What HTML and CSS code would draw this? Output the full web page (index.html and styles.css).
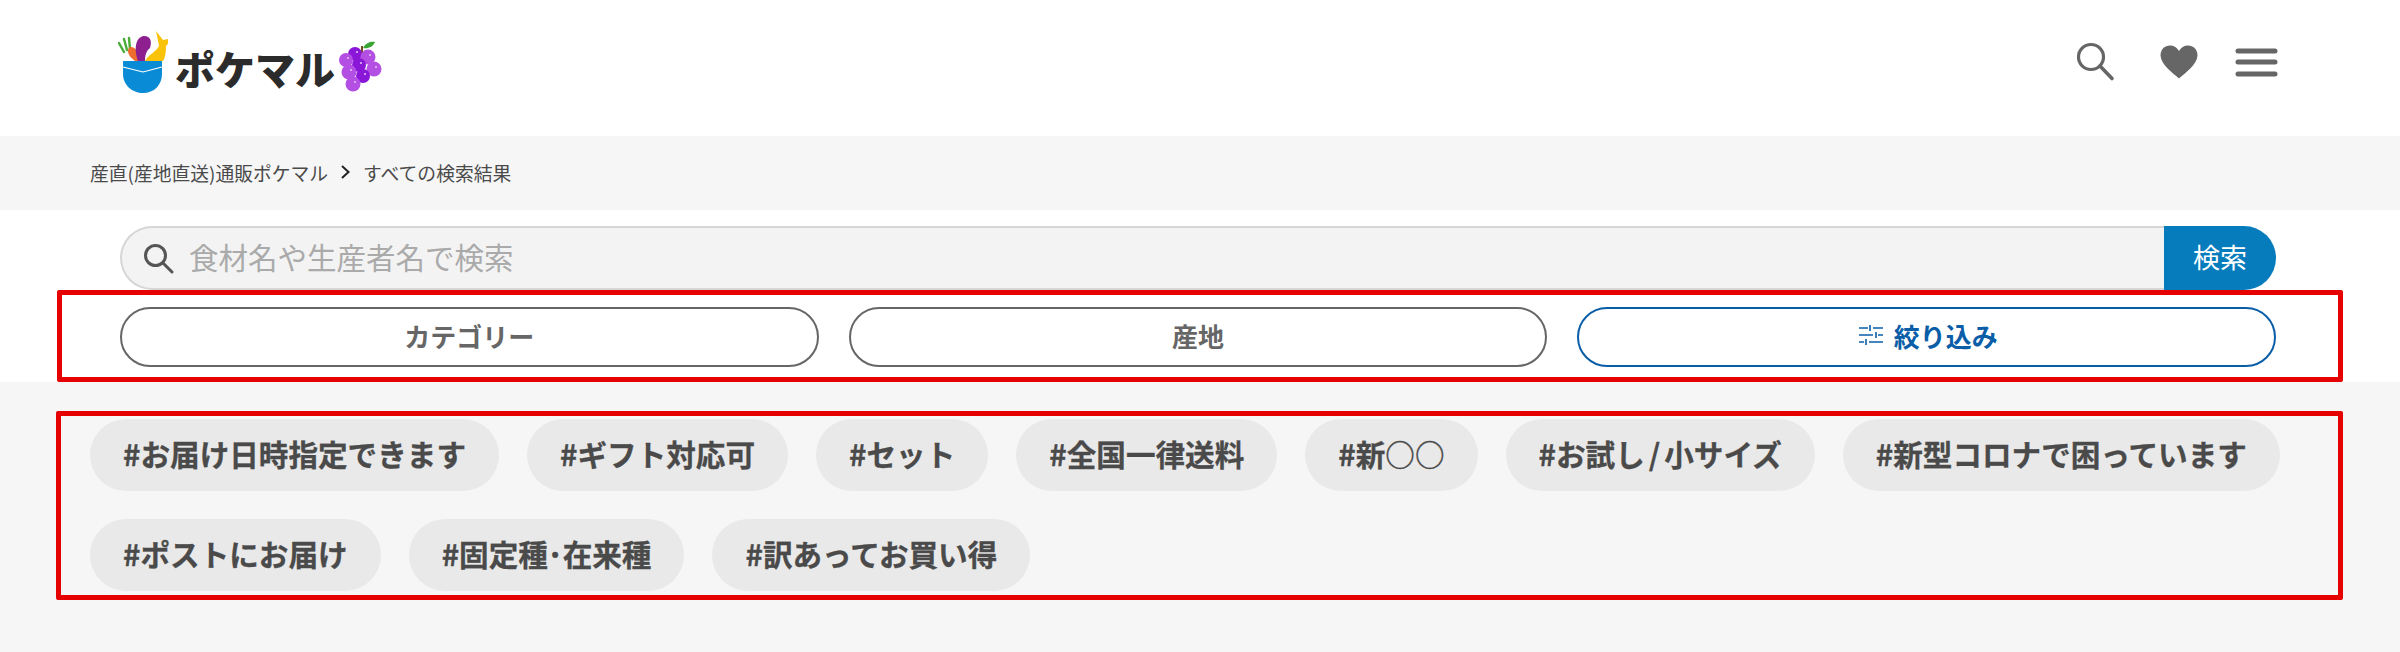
FILE: index.html
```html
<!DOCTYPE html>
<html lang="ja">
<head>
  <meta charset="UTF-8" />
  <title>すべての検索結果 | ポケマル</title>
  <link rel="stylesheet" href="styles.css">
</head>
<body>

<header class="site-header">
  <a class="logo" href="#">
    <svg class="logo-bag" width="50" height="64" viewBox="0 0 50 64">
      <path d="M6 22 L1 13 M9 20 L6 9 M12 19 L11 8" stroke="#4cae3a" stroke-width="2.5" stroke-linecap="round"/>
      <path d="M17 31 C10 26 8 20 12 17 C17 16 23 24 24 31 Z" fill="#ee6f2d"/>
      <path d="M20 31 C16 20 17 7 26 6 C33 6 34 12 32 18 C28 21 27 26 27 31 Z" fill="#8e1f8e"/>
      <path d="M27 31 C31 24 38 22 41 16 L38 1 L45 10 L55 8 L48 16 C48 23 47 28 45 31 Z" fill="#fbc20a"/>
      <path d="M5 31 H44 V44 C44 55 36 63 25 63 C14 63 5 55 5 44 Z" fill="#0a8bd6"/>
      <path d="M5 37 L25 42 L44 37" fill="none" stroke="#fff" stroke-width="1.2"/>
    </svg>
    <span class="logo-text">ポケマル</span>
    <svg class="logo-grape" width="44" height="52" viewBox="0 0 44 52">
      <path d="M24 14 L24 6" stroke="#7a4a20" stroke-width="2"/>
      <path d="M25 8 C28 2 34 1 37 2 C35 7 30 9 25 8 Z" fill="#3aa535"/>
      <circle cx="17" cy="14" r="7" fill="#8a17d8"/>
      <circle cx="30" cy="17" r="7.5" fill="#b44fe4"/>
      <circle cx="8" cy="20" r="7" fill="#b44fe4"/>
      <circle cx="21" cy="25" r="7" fill="#8a17d8"/>
      <circle cx="36" cy="29" r="7.5" fill="#b44fe4"/>
      <circle cx="11" cy="32" r="7.5" fill="#b44fe4"/>
      <circle cx="25" cy="36" r="7" fill="#8a17d8"/>
      <circle cx="15" cy="44" r="7.5" fill="#b44fe4"/>
      <g fill="#e6c4f7">
        <circle cx="19" cy="12" r="1"/>
        <circle cx="32" cy="15" r="1"/>
        <circle cx="10" cy="18" r="1"/>
        <circle cx="23" cy="23" r="1"/>
        <circle cx="38" cy="27" r="1"/>
        <circle cx="13" cy="30" r="1"/>
        <circle cx="27" cy="34" r="1"/>
        <circle cx="17" cy="42" r="1"/>
      </g>
    </svg>
  </a>
  <nav class="header-icons">
    <svg class="icon-search" width="40" height="40" viewBox="0 0 40 40">
      <circle cx="15" cy="15" r="12.5" fill="none" stroke="#666" stroke-width="3.2"/>
      <path d="M24 24 L36 36.500" stroke="#666" stroke-width="3.6" stroke-linecap="round"/>
    </svg>
    <svg width="38" height="34" viewBox="0 0 38 34">
      <path d="M19 33.500 C13 28 1 20 .5 10.500 C.5 4 5 .5 10 .5 C14 .5 17 2.500 19 6 C21 2.500 24 .5 28 .5 C33 .5 37.500 4 37.500 10.500 C37 20 25 28 19 33.500 Z" fill="#666"/>
    </svg>
    <svg width="43" height="30" viewBox="0 0 43 30">
      <path d="M3 4 H40 M3 15 H40 M3 27 H40" stroke="#666" stroke-width="5" stroke-linecap="round"/>
    </svg>
  </nav>
</header>

<div class="breadcrumb">
  <a href="#">産直(産地直送)通販ポケマル</a>
  <svg width="11" height="16" viewBox="0 0 11 16">
    <path d="M2 2 L8.500 8 L2 14" fill="none" stroke="#222" stroke-width="2"/>
  </svg>
  <span>すべての検索結果</span>
</div>

<form class="search">
  <div class="search-box">
    <svg width="32" height="32" viewBox="0 0 32 32">
      <circle cx="13.500" cy="13.500" r="10" fill="none" stroke="#555" stroke-width="3"/>
      <path d="M21 21 L30 30" stroke="#555" stroke-width="3" stroke-linecap="round"/>
    </svg>
    <input type="text" placeholder="食材名や生産者名で検索">
  </div>
  <button class="search-btn" type="button">検索</button>
</form>

<div class="filters">
  <button class="filter-btn" type="button">カテゴリー</button>
  <button class="filter-btn" type="button">産地</button>
  <button class="filter-btn narrow" type="button">
    <svg width="24" height="24" viewBox="0 0 24 24">
      <path d="M0 5 H9 M14 5 H24 M0 12 H14 M19 12 H24 M0 19 H5 M10 19 H24 M11 2 V8 M17 9 V15 M7 16 V22" fill="none" stroke="#0a5ea8" stroke-width="1.6"/>
    </svg>
    絞り込み
  </button>
</div>

<section class="tags">
  <a class="tag" href="#">#お届け日時指定できます</a>
  <a class="tag" href="#">#ギフト対応可</a>
  <a class="tag" href="#">#セット</a>
  <a class="tag" href="#">#全国一律送料</a>
  <a class="tag" href="#">#新○○</a>
  <a class="tag" href="#">#お試し<span class="slash">/</span>小サイズ</a>
  <a class="tag" href="#">#新型コロナで困っています</a>
  <a class="tag" href="#">#ポストにお届け</a>
  <a class="tag" href="#">#固定種･在来種</a>
  <a class="tag" href="#">#訳あってお買い得</a>
</section>

<!-- annotation boxes on top of the page -->
<div class="mark mark-filters"></div>
<div class="mark mark-tags"></div>

</body>
</html>
```

FILE: styles.css
```css
:root {
  --bg-gray: #f6f6f6;
  --text: #4a4a4a;
  --blue: #067cbd;
  --navy: #0a5ea8;
  --mark: #e60000;
}

* {
  box-sizing: border-box;
}

body {
  margin: 0;
  position: relative;
  background: #fff;
  color: var(--text);
  font-family: "Noto Sans CJK JP", "Noto Sans", sans-serif;
}

a {
  color: inherit;
  text-decoration: none;
}

.site-header {
  display: flex;
  justify-content: space-between;
  align-items: center;
  height: 136px;
  padding: 0 122px 12px 118px;
}

.logo {
  display: flex;
  align-items: flex-end;
  gap: 7px;
}

.logo-text {
  color: #2b2b2b;
  font-size: 40px;
  font-weight: 900;
  line-height: 52px;
}

.logo-grape {
  margin-bottom: 2px;
  margin-left: -4px;
}

.header-icons {
  display: flex;
  align-items: center;
  gap: 37px;
}

.icon-search {
  margin-right: 7px;
}

.breadcrumb {
  display: flex;
  align-items: center;
  gap: 12px;
  height: 74px;
  padding: 0 0 2px 90px;
  background: var(--bg-gray);
  font-size: 18.800px;
}

.search {
  display: flex;
  height: 64px;
  margin: 16px 124px 0 120px;
}

.search-box {
  flex: 1;
  display: flex;
  align-items: center;
  gap: 13px;
  padding-left: 20px;
  background: #f3f3f3;
  border: 2px solid #d6d6d6;
  border-right: none;
  border-radius: 32px 0 0 32px;
}

.search-box input {
  flex: 1;
  border: none;
  background: none;
  color: var(--text);
  margin-bottom: 4px;
  font: 29.500px "Noto Sans CJK JP", sans-serif;
}

.search-box input::placeholder {
  color: #aaa;
  opacity: 1;
}

.search-btn {
  width: 112px;
  padding-bottom: 4px;
  border: none;
  border-radius: 0 32px 32px 0;
  background: var(--blue);
  color: #fff;
  font: 27px "Noto Sans CJK JP", sans-serif;
}

.filters {
  display: grid;
  grid-template-columns: repeat(3, 1fr);
  gap: 30px;
  margin: 17px 124px 15px 120px;
}

.filter-btn {
  display: flex;
  justify-content: center;
  align-items: center;
  gap: 11px;
  height: 60px;
  padding: 0 0 4px;
  border: 2px solid #666;
  border-radius: 30px;
  background: #fff;
  color: #666;
  font: 700 26px "Noto Sans CJK JP", sans-serif;
}

.filter-btn.narrow {
  padding-left: 3px;
  border-color: var(--navy);
  color: var(--navy);
}

.tags {
  display: flex;
  flex-wrap: wrap;
  align-content: flex-start;
  gap: 28px;
  height: 270px;
  padding: 37px 100px 0 90px;
  background: var(--bg-gray);
}

.tag {
  display: flex;
  align-items: center;
  height: 72px;
  padding: 0 33px 4px;
  border-radius: 36px;
  background: #e9e9e9;
  font-size: 29.600px;
  font-weight: 700;
  -webkit-text-stroke: 0.3px var(--text);
  white-space: nowrap;
}

.slash {
  margin: 0 4px;
}

.mark {
  position: absolute;
  border: 5px solid var(--mark);
  border-radius: 2px;
}

.mark-filters {
  top: 290px;
  left: 57px;
  width: 2286px;
  height: 92px;
}

.mark-tags {
  top: 411px;
  left: 56px;
  width: 2287px;
  height: 189px;
}
```
